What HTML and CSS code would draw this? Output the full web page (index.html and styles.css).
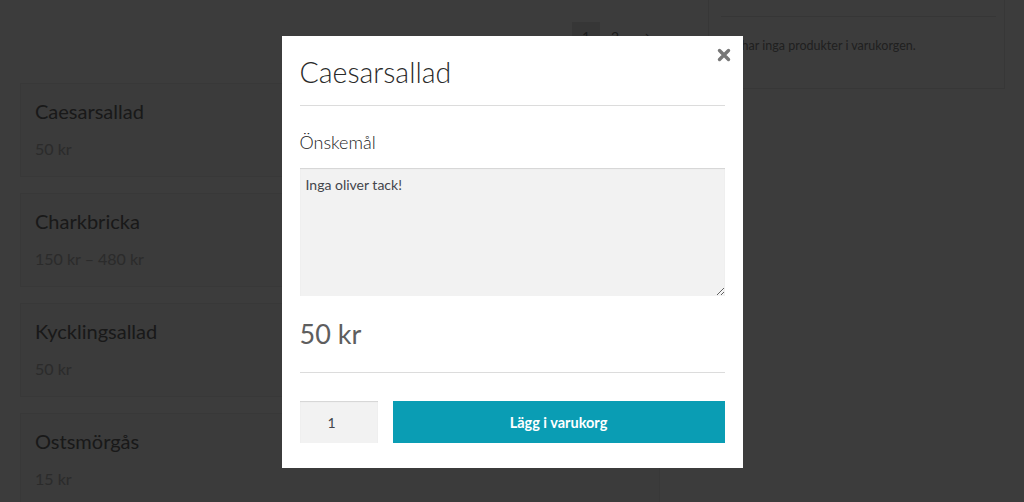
FILE: index.html
```html
<!DOCTYPE html>
<html lang="sv">
<head>
<meta charset="utf-8">
<title>Caesarsallad</title>
<link rel="stylesheet" href="styles.css">
</head>
<body>
<div class="page">
  <main class="content">
    <nav class="pagination">
      <span class="page-num current">1</span>
      <a class="page-num">2</a>
      <a class="page-num">→</a>
    </nav>
    <ul class="products">
      <li class="product"><h2 class="product-title">Caesarsallad</h2><span class="product-price">50 kr</span></li>
      <li class="product"><h2 class="product-title">Charkbricka</h2><span class="product-price">150 kr – 480 kr</span></li>
      <li class="product"><h2 class="product-title">Kycklingsallad</h2><span class="product-price">50 kr</span></li>
      <li class="product"><h2 class="product-title">Ostsmörgås</h2><span class="product-price">15 kr</span></li>
    </ul>
  </main>
  <aside class="sidebar">
    <div class="widget">
      <div class="widget-divider"></div>
      <p class="widget-text">Du har inga produkter i varukorgen.</p>
    </div>
  </aside>
</div>

<div class="overlay">
  <div class="modal">
    <button class="close" aria-label="Stäng">
      <svg viewBox="0 0 14 14" width="14" height="14"><path d="M2.5 2.5 L11.5 11.5 M11.5 2.5 L2.5 11.5" stroke="#777" stroke-width="3.4" stroke-linecap="round" fill="none"/></svg>
    </button>
    <h1 class="modal-title">Caesarsallad</h1>
    <label class="field-label" for="wish">Önskemål</label>
    <textarea id="wish" class="field-text">Inga oliver tack!</textarea>
    <p class="modal-price">50 kr</p>
    <form class="cart-row">
      <input class="qty" type="text" value="1">
      <button type="button" class="add-btn">Lägg i varukorg</button>
    </form>
  </div>
</div>
</body>
</html>
```

FILE: styles.css
```css
* { box-sizing: border-box; }

html, body {
  margin: 0;
  height: 100%;
  background: #fff;
  font-family: "Lato", "Open Sans", sans-serif;
  color: #333;
  overflow: hidden;
}

.page {
  display: flex;
  gap: 48px;
  padding: 0 19px 0 20px;
}

.content {
  width: 640px;
  padding-top: 22px;
}

.pagination {
  display: flex;
  justify-content: flex-end;
  gap: 1px;
  margin-bottom: 31px;
  padding-right: 2px;
}

.page-num {
  width: 28px;
  height: 30px;
  line-height: 30px;
  text-align: center;
  font-size: 14px;
  color: #777;
}

.page-num.current {
  background: #e6e6e6;
}

.products {
  list-style: none;
  margin: 0;
  padding: 0;
  display: flex;
  flex-direction: column;
  gap: 16px;
}

.product {
  background: #f8f8f8;
  border: 1px solid #ececec;
  padding: 15px 14px 18px;
  display: flex;
  flex-direction: column;
}

.product-title {
  margin: 0;
  font-size: 20px;
  line-height: 24px;
  font-weight: 400;
  color: #6b6b6b;
}

.product-price {
  margin-top: 16px;
  font-size: 16px;
  line-height: 19px;
  color: #b5b5b5;
}

.sidebar {
  width: 297px;
}

.widget {
  border: 1px solid #eaeaea;
  border-top: 0;
  padding: 0 8px 32px 12px;
  height: 89px;
}

.widget-divider {
  height: 17px;
  border-bottom: 1px solid #e4e4e4;
}

.widget-text {
  margin: 19px 0 0 1px;
  font-size: 12.5px;
  line-height: 19px;
  color: #888;
}

/* Modal */
.overlay {
  position: fixed;
  inset: 0;
  padding-top: 2px;
  background: rgba(0, 0, 0, 0.765);
  display: flex;
  align-items: center;
  justify-content: center;
}

.modal {
  position: relative;
  width: 461px;
  background: #fff;
  padding: 19px 18px 25px;
  display: flex;
  flex-direction: column;
}

.close {
  position: absolute;
  top: 12px;
  right: 12px;
  width: 14px;
  height: 14px;
  padding: 0;
  border: 0;
  background: none;
  display: flex;
}

.modal-title {
  margin: 0;
  font-size: 28.5px;
  line-height: 34px;
  font-weight: 300;
  color: #2a2a2a;
  padding-bottom: 16px;
  border-bottom: 1px solid #dcdcdc;
}

.field-label {
  margin-top: 25px;
  font-size: 18px;
  line-height: 22px;
  font-weight: 300;
  color: #222;
}

.field-text {
  margin-top: 15px;
  height: 128px;
  width: 100%;
  border: 0;
  background: #f2f2f2;
  box-shadow: inset 0 1px 1px rgba(0, 0, 0, 0.125);
  padding: 6px 6px;
  font-family: inherit;
  font-size: 14px;
  line-height: 21px;
  color: #43454b;
  outline: none;
}

.modal-price {
  margin: 21px 0 0;
  font-size: 27px;
  line-height: 34px;
  color: #5e5e5e;
  padding-bottom: 21px;
  border-bottom: 1px solid #dcdcdc;
}

.cart-row {
  margin-top: 28px;
  display: flex;
  gap: 15px;
  height: 42px;
}

.qty {
  width: 78px;
  border: 0;
  background: #f2f2f2;
  box-shadow: inset 0 1px 1px rgba(0, 0, 0, 0.125);
  text-align: center;
  padding: 0 14px 0 0;
  font-family: inherit;
  font-size: 14px;
  color: #43454b;
}

.add-btn {
  flex: 1;
  border: 0;
  background: #0a9db4;
  color: #fff;
  font-family: inherit;
  font-weight: 700;
  font-size: 14.5px;
}
```
